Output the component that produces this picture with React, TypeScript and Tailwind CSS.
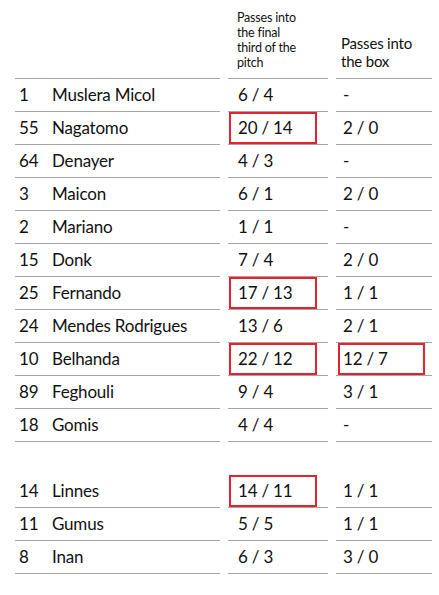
const rows: [string, string, string, string, boolean, boolean][] = [
  ["1", "Muslera Micol", "6 / 4", "-", false, false],
  ["55", "Nagatomo", "20 / 14", "2 / 0", true, false],
  ["64", "Denayer", "4 / 3", "-", false, false],
  ["3", "Maicon", "6 / 1", "2 / 0", false, false],
  ["2", "Mariano", "1 / 1", "-", false, false],
  ["15", "Donk", "7 / 4", "2 / 0", false, false],
  ["25", "Fernando", "17 / 13", "1 / 1", true, false],
  ["24", "Mendes Rodrigues", "13 / 6", "2 / 1", false, false],
  ["10", "Belhanda", "22 / 12", "12 / 7", true, true],
  ["89", "Feghouli", "9 / 4", "3 / 1", false, false],
  ["18", "Gomis", "4 / 4", "-", false, false],
];

const subs: [string, string, string, string, boolean, boolean][] = [
  ["14", "Linnes", "14 / 11", "1 / 1", true, false],
  ["11", "Gumus", "5 / 5", "1 / 1", false, false],
  ["8", "Inan", "6 / 3", "3 / 0", false, false],
];

function Row({ r }: { r: [string, string, string, string, boolean, boolean] }) {
  const [num, name, fin, box, hlFin, hlBox] = r;
  return (
    <>
      <div className="h-[33px] border-b border-[#a6a6a6] flex items-center pl-[4px]">
        <span className="w-[33px]">{num}</span>
        <span>{name}</span>
      </div>
      <div className="h-[33px] border-b border-[#a6a6a6] pl-px">
        <div className={`w-[88px] h-[32px] border-2 flex items-center pl-[7px] ${hlFin ? "border-[#e5222b]" : "border-transparent"}`}>
          {fin}
        </div>
      </div>
      <div className="h-[33px] border-b border-[#a6a6a6] pl-[2px]">
        <div className={`w-[87px] h-[32px] border-2 flex items-center pl-[3px] ${hlBox ? "border-[#e5222b]" : "border-transparent"}`}>
          {box}
        </div>
      </div>
    </>
  );
}

export default function App() {
  return (
    <div className="w-[439px] h-[595px] bg-white text-[#111] font-['Lato',sans-serif] text-[17px] tracking-[-0.2px]">
      <div className="ml-[15px] grid grid-cols-[205px_100px_96px] gap-x-2">
        {/* header */}
        <div className="h-[79px] border-b border-[#a6a6a6]" />
        <div className="h-[79px] border-b border-[#a6a6a6] flex items-end pl-[9px] pb-[8px]">
          <p className="text-[12.5px] leading-[15px] tracking-[-0.2px]">Passes into<br />the final<br />third of the<br />pitch</p>
        </div>
        <div className="h-[79px] border-b border-[#a6a6a6] flex items-end pl-[5px] pb-[8px]">
          <p className="text-[15px] leading-[18px]">Passes into<br />the box</p>
        </div>

        {rows.map((r) => (
          <Row key={r[1]} r={r} />
        ))}

        <div className="col-span-3 h-[33px]" />

        {subs.map((r) => (
          <Row key={r[1]} r={r} />
        ))}
      </div>
    </div>
  );
}
